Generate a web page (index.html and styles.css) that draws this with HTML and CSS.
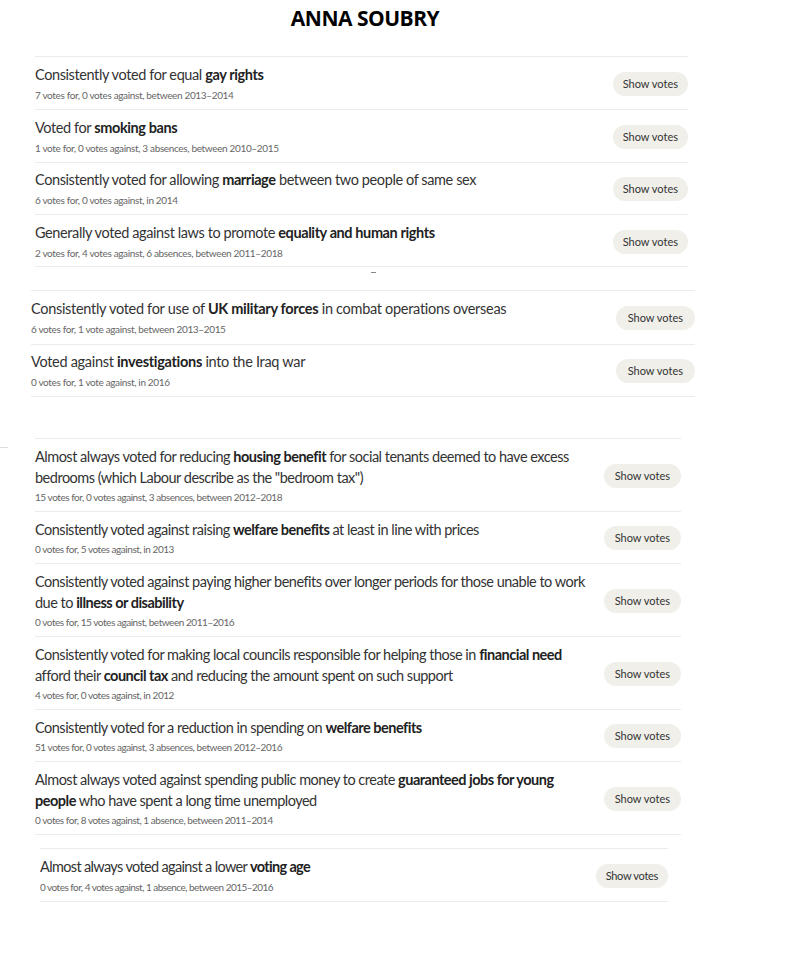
FILE: index.html
```html
<!DOCTYPE html>
<html lang="en">
<head>
<meta charset="utf-8">
<title>Anna Soubry</title>
<link rel="stylesheet" href="styles.css">
</head>
<body>
<h1 class="name">ANNA SOUBRY</h1>

<section class="group g1">
  <div class="row">
    <div class="text"><p class="title">Consistently voted for equal <b>gay rights</b></p><p class="meta">7 votes for, 0 votes against, between 2013–2014</p></div>
    <span class="btn">Show votes</span>
  </div>
  <div class="row">
    <div class="text"><p class="title">Voted for <b>smoking bans</b></p><p class="meta">1 vote for, 0 votes against, 3 absences, between 2010–2015</p></div>
    <span class="btn">Show votes</span>
  </div>
  <div class="row">
    <div class="text"><p class="title">Consistently voted for allowing <b>marriage</b> between two people of same sex</p><p class="meta">6 votes for, 0 votes against, in 2014</p></div>
    <span class="btn">Show votes</span>
  </div>
  <div class="row">
    <div class="text"><p class="title">Generally voted against laws to promote <b>equality and human rights</b></p><p class="meta">2 votes for, 4 votes against, 6 absences, between 2011–2018</p></div>
    <span class="btn">Show votes</span>
  </div>
</section>
<div class="dash"></div>

<section class="group g2">
  <div class="row">
    <div class="text"><p class="title">Consistently voted for use of <b>UK military forces</b> in combat operations overseas</p><p class="meta">6 votes for, 1 vote against, between 2013–2015</p></div>
    <span class="btn">Show votes</span>
  </div>
  <div class="row">
    <div class="text"><p class="title">Voted against <b>investigations</b> into the Iraq war</p><p class="meta">0 votes for, 1 vote against, in 2016</p></div>
    <span class="btn">Show votes</span>
  </div>
</section>

<div class="tick"></div>

<section class="group g3">
  <div class="row">
    <div class="text"><p class="title">Almost always voted for reducing <b>housing benefit</b> for social tenants deemed to have excess bedrooms (which Labour describe as the "bedroom tax")</p><p class="meta">15 votes for, 0 votes against, 3 absences, between 2012–2018</p></div>
    <span class="btn">Show votes</span>
  </div>
  <div class="row">
    <div class="text"><p class="title">Consistently voted against raising <b>welfare benefits</b> at least in line with prices</p><p class="meta">0 votes for, 5 votes against, in 2013</p></div>
    <span class="btn">Show votes</span>
  </div>
  <div class="row">
    <div class="text"><p class="title">Consistently voted against paying higher benefits over longer periods for those unable to work due to <b>illness or disability</b></p><p class="meta">0 votes for, 15 votes against, between 2011–2016</p></div>
    <span class="btn">Show votes</span>
  </div>
  <div class="row">
    <div class="text"><p class="title">Consistently voted for making local councils responsible for helping those in <b>financial need</b> afford their <b>council tax</b> and reducing the amount spent on such support</p><p class="meta">4 votes for, 0 votes against, in 2012</p></div>
    <span class="btn">Show votes</span>
  </div>
  <div class="row">
    <div class="text"><p class="title">Consistently voted for a reduction in spending on <b>welfare benefits</b></p><p class="meta">51 votes for, 0 votes against, 3 absences, between 2012–2016</p></div>
    <span class="btn">Show votes</span>
  </div>
  <div class="row">
    <div class="text"><p class="title">Almost always voted against spending public money to create <b>guaranteed jobs for young people</b> who have spent a long time unemployed</p><p class="meta">0 votes for, 8 votes against, 1 absence, between 2011–2014</p></div>
    <span class="btn">Show votes</span>
  </div>
</section>

<section class="group g4">
  <div class="row">
    <div class="text"><p class="title">Almost always voted against a lower <b>voting age</b></p><p class="meta">0 votes for, 4 votes against, 1 absence, between 2015–2016</p></div>
    <span class="btn">Show votes</span>
  </div>
</section>
</body>
</html>
```
FILE: styles.css
```css
html, body {
  margin: 0;
  padding: 0;
  background: #ffffff;
}
body {
  font-family: Lato, "Noto Sans", sans-serif;
  color: #333333;
  width: 812px;
  height: 958px;
  overflow: hidden;
}
.name {
  font-family: "Open Sans", sans-serif;
  font-weight: 700;
  font-size: 21px;
  letter-spacing: -0.5px;
  color: #000000;
  text-align: center;
  margin: 0;
  padding-top: 4px;
  height: 52px;
  line-height: 28px;
  box-sizing: border-box;
  width: 730px;
}
p { margin: 0; }
.group {
  display: flex;
  flex-direction: column;
}
.row {
  display: flex;
  align-items: center;
  justify-content: space-between;
  border-top: 1px solid #ebebeb;
  padding: 9px 0 7px 0;
  box-sizing: border-box;
}
.row:last-child { border-bottom: 1px solid #ebebeb; }
.text { flex: 1; }
.title {
  font-size: 14.5px;
  line-height: 20px;
  color: #333333;
  letter-spacing: -0.4px;
}
.title b { font-weight: 700; color: #222222; }
.meta {
  font-size: 10px;
  line-height: 16px;
  color: #666666;
  padding-top: 2px;
  letter-spacing: -0.35px;
}
.btn {
  flex: none;
  background: #f0efea;
  border-radius: 12px;
  height: 24px;
  line-height: 24px;
  padding: 0 11px;
  font-size: 11px;
  color: #333333;
  margin-left: 12px;
}
.g1 { margin: 4px 0 0 35px; width: 653px; }
.g1 .row { height: 52.75px; }
.g1 .btn { padding: 0 10px; }
.dash {
  width: 5px;
  height: 1px;
  background: #888888;
  margin: 5px 0 0 371px;
}
.g2 { margin: 17px 0 0 31px; width: 664px; }
.g2 .row { height: 53.5px; }
.g2 .title { letter-spacing: -0.3px; }
.g2 .meta { letter-spacing: -0.35px; }
.g2 .btn { padding: 0 12px; }
.tick {
  width: 8px;
  height: 1px;
  background: #dddddd;
  margin: 50px 0 0 0;
}
.g3 { margin: -10px 0 0 35px; width: 646px; }
.g3 .row { padding: 7px 0 6px 0; min-height: 52px; }
.g3 .title { line-height: 21px; max-width: 560px; letter-spacing: -0.5px; }
.g3 .meta { letter-spacing: -0.45px; padding-top: 1px; }
.g4 { margin: 13px 0 0 40px; width: 628px; }
.g4 .row { height: 54px; }
.g4 .title { letter-spacing: -0.65px; }
.g4 .meta { letter-spacing: -0.53px; }
.g4 .btn { padding: 0 10px; letter-spacing: -0.3px; }
```
